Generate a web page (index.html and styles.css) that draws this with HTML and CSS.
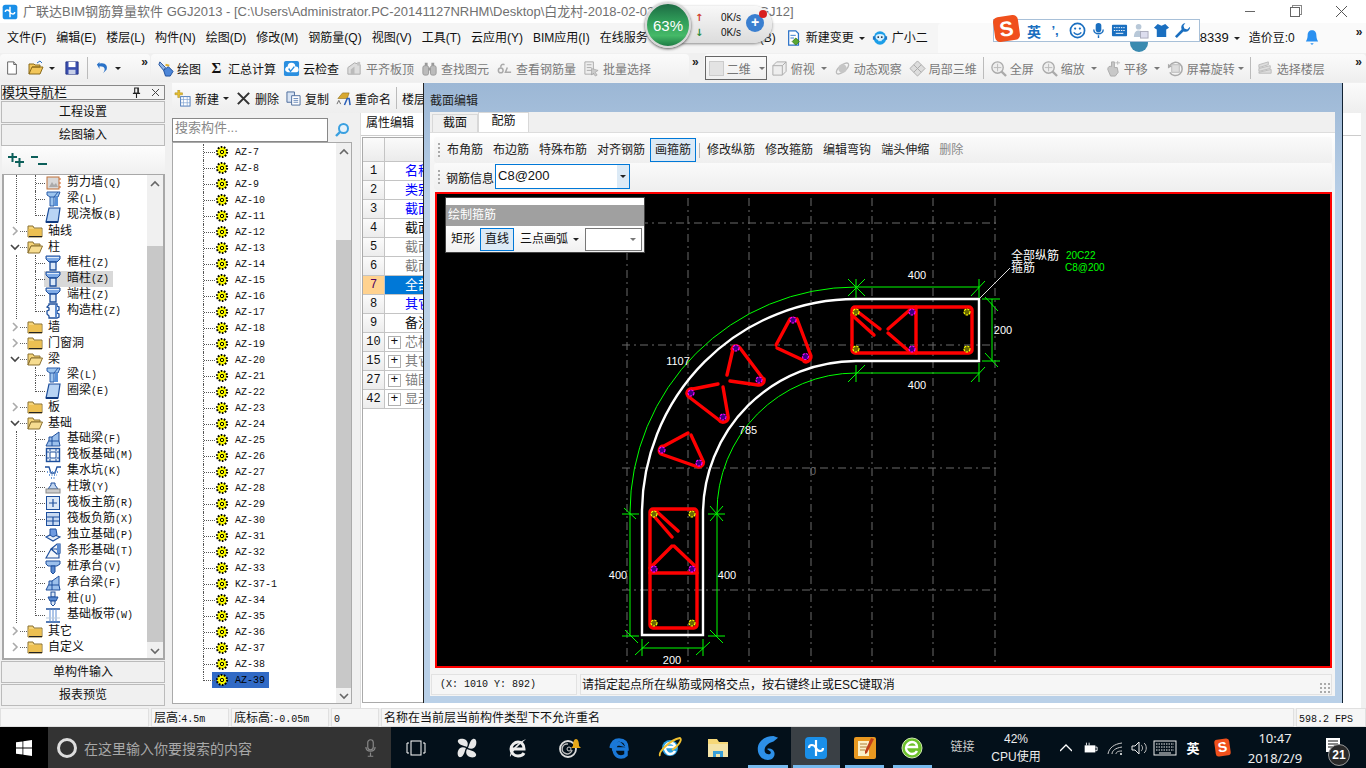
FILE: index.html
```html
<!DOCTYPE html>
<html lang="zh-CN">
<head>
<meta charset="utf-8">
<title>广联达BIM钢筋算量软件 GGJ2013</title>
<link rel="stylesheet" href="styles.css">
</head>
<body>
<svg class="defs" aria-hidden="true">
<defs>
<symbol id="doc" viewBox="0 0 16 16"><path d="M3 1h7l3 3v11H3z" fill="#fff" stroke="#555"/><path d="M10 1v3h3" fill="#ddd" stroke="#555"/></symbol>
<symbol id="open" viewBox="0 0 16 16"><path d="M1 14V4h5l1 1h5v2H4L1 14h11l3-7H4" fill="#f2c65a" stroke="#8a6a1a"/><path d="M9 3l3-2 2 2" fill="none" stroke="#2a6fc0"/></symbol>
<symbol id="save" viewBox="0 0 16 16"><path d="M1 1h14v14H1z" fill="#3a4fb0" stroke="#223080"/><path d="M4 1h8v6H4z" fill="#fff"/><path d="M4 10h8v5H4z" fill="#c8d0e8"/></symbol>
<symbol id="undo" viewBox="0 0 16 16"><path d="M4 3c6-2 10 2 8 7l-4 4c3-4 3-8-4-8v3L1 4l3-3z" fill="#2a72c8"/></symbol>
<symbol id="draw" viewBox="0 0 18 18"><path d="M3 2l6 6-2 3-5-6z" fill="#8fb4e6" stroke="#1e4f9c"/><path d="M7 11l5-4 5 5-3 5H9z" fill="#4d86d8" stroke="#1e4f9c"/><path d="M9 5l4 1" stroke="#e0b030" stroke-width="2"/></symbol>
<symbol id="cloud" viewBox="0 0 18 18"><rect x="1" y="1" width="16" height="16" rx="2" fill="#2a8fe0"/><path d="M3 12a3 3 0 0 1 2-5 4 4 0 0 1 8 0 3 3 0 0 1 1 6H5z" fill="#fff"/><path d="M6 9l2 3 4-5" fill="none" stroke="#2a8fe0" stroke-width="1.5"/></symbol>
<symbol id="gflat" viewBox="0 0 18 18"><path d="M2 15V8l7-5 6 2v10z" fill="#ddd" stroke="#aaa"/><path d="M5 15v-5l4-3v8z" fill="#bbb"/><path d="M12 2h3v4h-3z" fill="#c4c4c4"/></symbol>
<symbol id="gfind" viewBox="0 0 18 18"><rect x="2" y="6" width="6" height="10" rx="2" fill="#bbb" stroke="#999"/><rect x="10" y="6" width="6" height="10" rx="2" fill="#bbb" stroke="#999"/><path d="M4 3h3v3H4zM11 3h3v3h-3zM8 8h2v3H8z" fill="#999"/></symbol>
<symbol id="gsee" viewBox="0 0 18 18"><circle cx="5" cy="11" r="2.5" fill="none" stroke="#aaa" stroke-width="1.6"/><path d="M5 8c0-3 2-4 4-3M12 8l-2 5 6 0" fill="none" stroke="#aaa" stroke-width="1.6"/></symbol>
<symbol id="gbatch" viewBox="0 0 18 18"><path d="M2 2h9v13H2z" fill="#eee" stroke="#aaa"/><path d="M4 5h5M4 8h5M4 11h5" stroke="#aaa"/><path d="M9 9l7 2-3 2 2 3-2 1-2-3-2 2z" fill="#ccc" stroke="#999" stroke-width=".6"/></symbol>
<symbol id="gcube" viewBox="0 0 18 18"><path d="M2 6l4-4h10v10l-4 4H2z" fill="#eee" stroke="#aaa"/><path d="M2 6h10v10M12 6l4-4" fill="none" stroke="#aaa"/></symbol>
<symbol id="gorbit" viewBox="0 0 18 18"><ellipse cx="9" cy="9" rx="8" ry="3.5" transform="rotate(-40 9 9)" fill="none" stroke="#bbb" stroke-width="1.4"/><circle cx="9" cy="9" r="4.5" fill="#c6c6c6"/></symbol>
<symbol id="glocal" viewBox="0 0 18 18"><path d="M9 1l8 8-8 8-8-8z" fill="#ddd" stroke="#aaa"/><path d="M5 5l8 8M13 5l-8 8" stroke="#aaa"/></symbol>
<symbol id="gzoom" viewBox="0 0 18 18"><circle cx="8" cy="8" r="6" fill="#eee" stroke="#aaa" stroke-width="1.4"/><path d="M12 12l5 5" stroke="#aaa" stroke-width="2.4"/><path d="M8 4v8M4 8h8" stroke="#bbb"/></symbol>
<symbol id="gpan" viewBox="0 0 18 18"><path d="M4 10c0-3 2-4 4-3V2h3v6h3l1 5-3 4H7z" fill="#c8c8c8" stroke="#aaa"/><path d="M12 3h5M14.500 1v4" stroke="#bbb"/></symbol>
<symbol id="grot" viewBox="0 0 18 18"><path d="M3 6a7 7 0 1 1 0 7" fill="none" stroke="#aaa" stroke-width="1.6"/><rect x="5" y="5" width="8" height="8" fill="#ddd" stroke="#bbb"/><path d="M1 4l4 3-4 2z" fill="#aaa"/></symbol>
<symbol id="gfloor" viewBox="0 0 18 18"><path d="M2 5l10-3v3L2 8zM2 9l12-3v3L2 12zM2 13l13-3v4H2z" fill="#ddd" stroke="#bbb"/></symbol>
<symbol id="newchg" viewBox="0 0 18 18"><path d="M3 1h8l3 3v13H3z" fill="#fff" stroke="#2a72c8" stroke-width="1.4"/><path d="M5 6h6M5 9h4" stroke="#2a72c8"/><path d="M11 9l4 4-4 4-4-4z" fill="#5aa832" stroke="#3a7a20"/></symbol>
<symbol id="mascot" viewBox="0 0 18 18"><ellipse cx="9" cy="9" rx="7" ry="7.500" fill="#1c9ee8"/><path d="M1 7h3v4H1zM14 7h3v4h-3z" fill="#1c78c8"/><ellipse cx="9" cy="8" rx="5" ry="3.500" fill="#d8f0ff"/><circle cx="7" cy="8" r="1" fill="#123"/><circle cx="11" cy="8" r="1" fill="#123"/><path d="M7 12h4" stroke="#fff"/></symbol>
<symbol id="newc" viewBox="0 0 18 18"><path d="M1 3h3V0h2v3h3v2H6v3H4V5H1z" fill="#e8c030" stroke="#a08010" stroke-width=".5"/><rect x="7" y="7" width="10" height="10" fill="#fff" stroke="#4a78b8"/><path d="M7 10h10M10 7v10M14 7v10M7 13.500h10" stroke="#7aa0d0" stroke-width=".7"/></symbol>
<symbol id="xdel" viewBox="0 0 16 16"><path d="M2 2l12 12M14 2L2 14" stroke="#333" stroke-width="2.200"/></symbol>
<symbol id="copy" viewBox="0 0 16 16"><path d="M1 1h8v11H1z" fill="#d8e4f4" stroke="#4a6a9a"/><path d="M6 5h9v10H6z" fill="#fff" stroke="#4a6a9a"/><path d="M8 8h5M8 10h5M8 12h5" stroke="#6a8aba"/></symbol>
<symbol id="ren" viewBox="0 0 16 16"><path d="M2 8l5-6h7l-2 6z" fill="#d8a830" stroke="#8a6a10" stroke-width=".6"/><path d="M9 15l3-7h2l1 7" fill="none" stroke="#2a5fb8" stroke-width="1.600"/><path d="M1 14l2-4 2 4" fill="none" stroke="#666"/></symbol>
<symbol id="search" viewBox="0 0 16 16"><circle cx="9.500" cy="6.500" r="4.500" fill="#e6f2fb" stroke="#3aa0e0" stroke-width="2"/><path d="M6 10l-4 4" stroke="#3aa0e0" stroke-width="2.400"/></symbol>
<symbol id="folder" viewBox="0 0 16 14"><path d="M1 2h5l1 2h8v9H1z" fill="#f5d478" stroke="#8a7030"/><path d="M1.500 5h13v7.500h-13z" fill="#edc052"/><path d="M2 12.500h13" stroke="#222"/></symbol>
<symbol id="folderopen" viewBox="0 0 16 14"><path d="M1 2h5l1 2h6v2H4L1 13z" fill="#f5d478" stroke="#8a7030"/><path d="M1 13l3-7h11.500l-3 7z" fill="#f6dc90" stroke="#8a7030"/></symbol>
<symbol id="chevr" viewBox="0 0 10 10"><path d="M3 1l4 4-4 4" fill="none" stroke="#aaa" stroke-width="1.600"/></symbol>
<symbol id="chevd" viewBox="0 0 10 10"><path d="M1 3l4 4 4-4" fill="none" stroke="#444" stroke-width="1.600"/></symbol>
<symbol id="wall" viewBox="0 0 16 16"><rect x="2" y="2" width="12" height="12" fill="#d8d8d8" stroke="#c07038"/><path d="M4 12l3-5 2 3 2-2 2 4z" fill="#aaa"/><path d="M15 3v11" stroke="#d06020" stroke-dasharray="2 2"/></symbol>
<symbol id="beam" viewBox="0 0 16 16"><path d="M2 1h13l-2 5H9v9H5V6L2 4z" fill="#9cc4ee" stroke="#2a5ca8"/><path d="M9 6l4-5M5 6h4" stroke="#2a5ca8"/><path d="M10 6h3v9h-4z" fill="#5a92d8"/></symbol>
<symbol id="slab" viewBox="0 0 16 16"><path d="M4 1h11l-2 14H1z" fill="#b8d4f4" stroke="#1e4f9c" stroke-width="1.200"/><path d="M1 15h12" stroke="#103a80" stroke-width="2"/></symbol>
<symbol id="col" viewBox="0 0 16 16"><path d="M1 1h14v3l-3 3H4L1 4z" fill="#7eaae6" stroke="#1e4f9c"/><path d="M5 7h6v8H5z" fill="#dbe8f8" stroke="#1e4f9c" stroke-width="1.300"/><path d="M2 2.500h12" stroke="#e0ecfa"/></symbol>
<symbol id="gzz" viewBox="0 0 16 16"><path d="M4 1h8v2l2 1v3l-2 1v2l2 1v3l-2 1H4v-2L2 11V8l2-1V5L2 4l2-2z" fill="#f4f8fd" stroke="#1e4f9c" stroke-width="1.300"/><path d="M10 2h2v12h-2z" fill="#5a8ad0"/></symbol>
<symbol id="jcl" viewBox="0 0 16 16"><path d="M1 15l3-6V6h3l7-5v9l1 5z" fill="#9cc0ec" stroke="#1e4f9c"/><path d="M7 6v9M4 10h10" stroke="#1e4f9c"/></symbol>
<symbol id="grid" viewBox="0 0 16 16"><rect x="1.500" y="1.500" width="13" height="13" fill="#eaf2fb" stroke="#1e4f9c" stroke-width="1.400"/><rect x="5" y="5" width="6" height="6" fill="#fff" stroke="#1e4f9c"/><path d="M1 5h3M12 5h3M1 11h3M12 11h3M5 1v3M11 1v3M5 12v3M11 12v3" stroke="#1e4f9c"/></symbol>
<symbol id="pit" viewBox="0 0 16 16"><path d="M0 4h4l2 6h4l2-6h4" fill="none" stroke="#1e4f9c" stroke-width="1.300"/><path d="M2 9h12M4 12h8M6 15h4" stroke="#6a9ad8" stroke-dasharray="1 1.500" stroke-width="2"/></symbol>
<symbol id="dun" viewBox="0 0 16 16"><path d="M6 4h4v2l3 4H3l3-4z" fill="#c2d6f0" stroke="#1e4f9c"/><rect x="1" y="10" width="14" height="4" fill="#ccc" stroke="#888"/></symbol>
<symbol id="cross" viewBox="0 0 16 16"><rect x="1.500" y="1.500" width="13" height="13" fill="#dce8f6" stroke="#1e4f9c"/><path d="M8 4v8M4 8h8" stroke="#1e4f9c" stroke-width="1.200"/></symbol>
<symbol id="cross2" viewBox="0 0 16 16"><rect x="1.500" y="1.500" width="13" height="13" fill="#c8daf2" stroke="#1e4f9c"/><path d="M2 6h12M2 10h12M8 6v8" stroke="#1e4f9c" stroke-width="1.200"/></symbol>
<symbol id="dl" viewBox="0 0 16 16"><path d="M1 10l6-3 8 3-7 4z" fill="#e8eef8" stroke="#1e4f9c" stroke-width="1.200"/><path d="M5 2h6l1 6-4 2-3-2z" fill="#6e9ae0" stroke="#1e4f9c"/></symbol>
<symbol id="tx" viewBox="0 0 16 16"><path d="M6 6l6-5h3v9l-3 1zM1 15l5-9h6l2 5v4z" fill="#f2f6fb" stroke="#1e4f9c" stroke-width="1.200"/><path d="M12 1h3v9l-3 1z" fill="#5a8ad0"/></symbol>
<symbol id="zct" viewBox="0 0 16 16"><path d="M1 2h14v3l-3 2H3L1 5z" fill="#9cc0ec" stroke="#1e4f9c"/><path d="M6 7h4v6l-2 2-2-2z" fill="#5a8ad0" stroke="#1e4f9c"/></symbol>
<symbol id="pile" viewBox="0 0 16 16"><rect x="6" y="1" width="4" height="5" fill="#dce8f6" stroke="#1e4f9c"/><path d="M3 6h10l-2 4H5z" fill="#5a8ad0" stroke="#1e4f9c"/><path d="M6 10h4v3l-2 2-2-2z" fill="#dce8f6" stroke="#1e4f9c"/></symbol>
<symbol id="jcbd" viewBox="0 0 16 16"><path d="M1 2h14M1 15h14" stroke="#1e4f9c" stroke-width="1.500"/><path d="M5 2v13M8 2v13M11 2v13" stroke="#5a8ad0"/><path d="M1 11h14" stroke="#bcd"/></symbol>
<symbol id="gear" viewBox="0 0 14 14"><circle cx="7" cy="7" r="5" fill="#ff0" stroke="#000" stroke-width="2.200" stroke-dasharray="1.600 1.500"/><circle cx="7" cy="7" r="3.600" fill="#ff0"/><circle cx="7" cy="7" r="1.700" fill="none" stroke="#000"/></symbol>
<symbol id="win" viewBox="0 0 16 16"><path d="M0 2.300l6.500-.9v6.200H0zM7.300 1.300L16 0v7.600H7.300zM0 8.400h6.500v6.200L0 13.700zM7.300 8.400H16V16l-8.700-1.200z" fill="#fff"/></symbol>
<symbol id="tv" viewBox="0 0 20 16"><rect x="5" y="1" width="10" height="14" fill="none" stroke="#fff"/><path d="M3 3H1v10h2M17 3h2v10h-2" fill="none" stroke="#fff"/></symbol>
<symbol id="fan" viewBox="0 0 22 22"><g fill="#e8e8e8"><path d="M11 10C9 9 3 8 2 5c-1-3 3-4 6-3 3 1 5 4 3 8z"/><path d="M12 11c1-2 2-8 5-9 3-1 4 3 3 6-1 3-4 5-8 3z"/><path d="M11 12c2 1 8 2 9 5 1 3-3 4-6 3-3-1-5-4-3-8z"/><path d="M10 11c-1 2-2 8-5 9-3 1-4-3-3-6 1-3 4-5 8-3z"/></g></symbol>
<symbol id="iew" viewBox="0 0 22 22"><path d="M4 12h13c0-5-3-7-6-7s-7 3-7 7 3 7 7 7c3 0 5-1 6-3" fill="none" stroke="#eee" stroke-width="3"/><path d="M3 20C2 16 9 6 19 2 15 6 9 9 3 20z" fill="#eee"/></symbol>
<symbol id="swirl" viewBox="0 0 24 22"><circle cx="10" cy="12" r="8" fill="none" stroke="#ddd" stroke-width="1.800"/><path d="M10 7a5 5 0 1 0 4 6" fill="none" stroke="#bbb" stroke-width="1.500"/><circle cx="11" cy="12" r="2" fill="none" stroke="#ccc"/><path d="M15 9c0-4 1-7 3-7s3 3 3 7l2 2H13z" fill="#e8a818"/></symbol>
<symbol id="edge" viewBox="0 0 22 22"><path d="M3 12h15c0-6-3-9-8-9-4 0-7 3-8 8 1-3 5-5 9-4-1-1-4 0-5 3-2 5 1 10 6 10 2 0 4-1 5-2v-5" fill="none" stroke="#1a78d8" stroke-width="3.500"/></symbol>
<symbol id="ie" viewBox="0 0 24 24"><circle cx="12" cy="12" r="8" fill="#2a9fe0"/><path d="M7 11h10c0-3-2-4-5-4s-5 3-5 5 2 6 5 6c2 0 4-1 5-3" fill="none" stroke="#fff" stroke-width="2.500"/><path d="M2 20C0 16 12 4 22 2c3 2-3 9-8 12" fill="none" stroke="#f0c030" stroke-width="1.800"/></symbol>
<symbol id="exp" viewBox="0 0 24 22"><path d="M2 2h9l2 3h9v15H2z" fill="#f6d878"/><path d="M2 7h20v13H2z" fill="#f4e4a8"/><path d="M7 14h10v6h-3v-3h-4v3H7z" fill="#3aa0d8"/></symbol>
<symbol id="glogo" viewBox="0 0 26 28"><path d="M20 1C10 1 3 7 3 15c0 7 5 12 11 12 5 0 8-4 7-8-1-4-5-5-8-4l4 3c1 3-4 4-6 1-2-4 1-10 9-12l5-4z" fill="#2d90e8"/></symbol>
<symbol id="gld" viewBox="0 0 24 24"><rect x="1" y="1" width="22" height="22" rx="4" fill="#1a8fe8"/><path d="M12 4v16M5 12c0-4 5-4 7 0s7 4 7 0" fill="none" stroke="#fff" stroke-width="2.200"/></symbol>
<symbol id="notes" viewBox="0 0 24 24"><rect x="1" y="1" width="22" height="22" rx="2" fill="#e89820"/><path d="M5 5h11v15H5z" fill="#fbf0c8"/><path d="M7 8h7M7 11h7M7 14h5" stroke="#b0803a"/><path d="M18 2l3 1-7 14-2 1v-3z" fill="#c0401a"/></symbol>
<symbol id="greene" viewBox="0 0 24 24"><circle cx="12" cy="12" r="10" fill="#6cc02a" stroke="#cfe8b0"/><path d="M6 11h11c0-3-2-5-5-5s-6 3-6 6 3 6 6 6c2 0 4-1 5-3" fill="none" stroke="#fff" stroke-width="2.400"/></symbol>
<symbol id="tup" viewBox="0 0 12 12"><path d="M0 9l6-6 6 6" fill="none" stroke="#fff" stroke-width="1.300"/></symbol>
<symbol id="batt" viewBox="0 0 18 14"><rect x="3" y="4" width="12" height="8" fill="#fff"/><path d="M5 4V1M8 4V1M15 6h2v4h-2" stroke="#fff" fill="none"/></symbol>
<symbol id="wifi" viewBox="0 0 16 14"><path d="M1 13C2 7 7 3 15 2M5 13c0-3 3-6 10-7M9 13c0-2 2-3 6-3" fill="none" stroke="#ccc"/><circle cx="14" cy="13" r="1" fill="#fff"/></symbol>
<symbol id="vol" viewBox="0 0 16 14"><path d="M1 5h3l4-4v12L4 9H1z" fill="none" stroke="#eee"/><path d="M10 4c2 1 2 5 0 6M13 2c3 2 3 8 0 10" fill="none" stroke="#bbb"/></symbol>
<symbol id="kbd" viewBox="0 0 24 16"><rect x="1" y="1" width="22" height="14" fill="none" stroke="#eee"/><path d="M3 4h18M3 7h18M3 10h18" stroke="#eee" stroke-dasharray="1.500 1"/><path d="M6 13h12" stroke="#eee"/></symbol>
<symbol id="note" viewBox="0 0 16 16"><path d="M1 1h14v14H1z" fill="#fff"/><path d="M3 4h10M3 7h10M3 10h10" stroke="#111" stroke-width="1.200"/></symbol>
<symbol id="mic" viewBox="0 0 12 20"><rect x="3" y="1" width="6" height="11" rx="3" fill="none" stroke="#888" stroke-width="1.300"/><path d="M1 9c0 6 10 6 10 0M6 15v4M3 19h6" fill="none" stroke="#888" stroke-width="1.300"/></symbol>
<symbol id="smile" viewBox="0 0 18 18"><circle cx="9" cy="9" r="7.500" fill="#fff" stroke="#1a6fc0" stroke-width="1.800"/><circle cx="6.500" cy="7" r="1.200" fill="#1a6fc0"/><circle cx="11.500" cy="7" r="1.200" fill="#1a6fc0"/><path d="M5 11c2 3 6 3 8 0" fill="none" stroke="#1a6fc0" stroke-width="1.500"/></symbol>
<symbol id="micb" viewBox="0 0 14 18"><rect x="4" y="1" width="6" height="10" rx="3" fill="#1a6fc0"/><path d="M2 8c0 6 10 6 10 0M7 14v3" fill="none" stroke="#1a6fc0" stroke-width="1.500"/></symbol>
<symbol id="kbb" viewBox="0 0 18 14"><rect x="1" y="1" width="16" height="12" rx="1" fill="#1a6fc0"/><path d="M3 4h12M3 7h12" stroke="#fff" stroke-dasharray="1.500 1"/><path d="M5 10h8" stroke="#fff"/></symbol>
<symbol id="usr" viewBox="0 0 18 18"><circle cx="7" cy="5" r="3" fill="#b8c8d8"/><path d="M2 16c0-6 3-7 5-7s4 1 4 2v5z" fill="#b8c8d8"/><rect x="9" y="10" width="8" height="7" fill="#dde" stroke="#aab"/></symbol>
<symbol id="tee" viewBox="0 0 18 18"><path d="M5 2l4 2 4-2 4 4-3 2v8H4V8L1 6z" fill="#1a6fc0"/></symbol>
<symbol id="wrench" viewBox="0 0 18 18"><path d="M12 1a5 5 0 0 0-4 7l-7 7 2 2 7-7a5 5 0 0 0 7-5l-3 3-3-1-1-3z" fill="#1a6fc0"/></symbol>
<symbol id="bell" viewBox="0 0 16 20"><path d="M8 1c4 0 5 3 5 6 0 3 1 5 2 7H1c1-2 2-4 2-7 0-3 1-6 5-6z" fill="#2a90f0"/><path d="M6 16h4l-2 2z" fill="#2a90f0"/></symbol>
<symbol id="pinx" viewBox="0 0 10 12"><path d="M3 1h4v6H3z" fill="none" stroke="#222" stroke-width="1.200"/><path d="M1 7h8M5 7v5" stroke="#222" stroke-width="1.200"/><path d="M6 1h1v6H6z" fill="#222"/></symbol>
</defs>
</svg>

<div class="app">
  <header class="titlebar">
    <svg class="ico-title"><use href="#gld"/></svg>
    <span class="title-text">广联达BIM钢筋算量软件 GGJ2013 - [C:\Users\Administrator.PC-20141127NRHM\Desktop\白龙村-2018-02-02-</span>
    <span class="title-tail">GJ12]</span>
    <div class="winctl">
      <span class="wc-min"></span><span class="wc-max"></span>
      <svg class="wc-x" viewBox="0 0 11 11"><path d="M0 0l11 11M11 0L0 11" stroke="#555"/></svg>
    </div>
  </header>

  <nav class="menubar">
    <span>文件(F)</span><span>编辑(E)</span><span>楼层(L)</span><span>构件(N)</span><span>绘图(D)</span><span>修改(M)</span><span>钢筋量(Q)</span><span>视图(V)</span><span>工具(T)</span><span>云应用(Y)</span><span>BIM应用(I)</span><span>在线服务</span><span class="m-b">(B)</span>
    <span class="m-item"><svg class="i16"><use href="#newchg"/></svg>新建变更<i class="caret caret-m"></i></span>
    <span class="m-item"><svg class="i16"><use href="#mascot"/></svg>广小二</span>
    <div class="m-right">
      <i class="avatar"></i>
      <span class="acct">8339</span><i class="caret caret-a"></i>
      <span class="bean">造价豆:0</span>
      <svg class="i-bell"><use href="#bell"/></svg>
      <span class="more more-top">»</span>
    </div>
  </nav>

  <div class="toolbar">
    <div class="seg seg1">
      <svg class="i14"><use href="#doc"/></svg>
      <svg class="i16 sp1"><use href="#open"/></svg><i class="caret"></i>
      <svg class="i14 sp2"><use href="#save"/></svg>
      <i class="vsep"></i>
      <svg class="i14"><use href="#undo"/></svg><i class="caret"></i>
      <span class="more more-l">»</span>
    </div>
    <div class="seg seg2">
      <span class="tool"><svg class="i17"><use href="#draw"/></svg>绘图</span>
      <span class="tool"><span class="sigma">Σ</span>汇总计算</span>
      <span class="tool"><svg class="i17"><use href="#cloud"/></svg>云检查</span>
      <span class="tool off"><svg class="i17"><use href="#gflat"/></svg>平齐板顶</span>
      <span class="tool off"><svg class="i17"><use href="#gfind"/></svg>查找图元</span>
      <span class="tool off"><svg class="i17"><use href="#gsee"/></svg>查看钢筋量</span>
      <span class="tool off"><svg class="i17"><use href="#gbatch"/></svg>批量选择</span>
    </div>
    <span class="more more-m">»</span>
    <div class="seg seg3">
      <span class="box2d"><i class="sq"></i>二维<i class="caret caret-g"></i></span>
      <span class="tool off"><svg class="i17"><use href="#gcube"/></svg>俯视<i class="caret caret-g caret-t"></i></span>
      <span class="tool off"><svg class="i17"><use href="#gorbit"/></svg>动态观察</span>
      <span class="tool off"><svg class="i17"><use href="#glocal"/></svg>局部三维</span>
      <i class="vsep vsep-t"></i>
      <span class="tool off"><svg class="i17"><use href="#gzoom"/></svg>全屏</span>
      <span class="tool off"><svg class="i17"><use href="#gzoom"/></svg>缩放<i class="caret caret-g caret-t"></i></span>
      <span class="tool off"><svg class="i17"><use href="#gpan"/></svg>平移<i class="caret caret-g caret-t"></i></span>
      <span class="tool off"><svg class="i17"><use href="#grot"/></svg>屏幕旋转<i class="caret caret-g"></i></span>
      <i class="vsep vsep-t"></i>
      <span class="tool off"><svg class="i17"><use href="#gfloor"/></svg>选择楼层</span>
      <span class="more more-r">»</span>
    </div>
  </div>

  <main class="workspace">
    <aside class="nav">
      <div class="nav-head"><span>模块导航栏</span><svg class="pin"><use href="#pinx"/></svg><svg class="nav-x" viewBox="0 0 9 9"><path d="M1 1l7 7M8 1L1 8" stroke="#444"/></svg></div>
      <div class="nav-btn">工程设置</div>
      <div class="nav-btn">绘图输入</div>
      <div class="nav-tools">
        <svg class="plusminus" viewBox="0 0 42 16"><path d="M1 5h9M5.500 1v9M8 10h9M12.500 6v9" stroke="#0c5f5a" stroke-width="2"/><path d="M24 5h7M31 12h9" stroke="#0c5f5a" stroke-width="2"/></svg>
      </div>
      <div class="treebox">
        <div class="tree">
          <div class="kids">
            <div class="kid"><i class="cn"></i><svg class="i16"><use href="#wall"/></svg><span>剪力墙<b>(Q)</b></span></div>
            <div class="kid"><i class="cn"></i><svg class="i16"><use href="#beam"/></svg><span>梁<b>(L)</b></span></div>
            <div class="kid"><i class="cn"></i><svg class="i16"><use href="#slab"/></svg><span>现浇板<b>(B)</b></span></div>
          </div>
          <div class="root"><svg class="chev"><use href="#chevr"/></svg><i class="rc"></i><svg class="fold"><use href="#folder"/></svg><span>轴线</span></div>
          <div class="root"><svg class="chev"><use href="#chevd"/></svg><i class="rc"></i><svg class="fold"><use href="#folderopen"/></svg><span>柱</span></div>
          <div class="kids">
            <div class="kid"><i class="cn"></i><svg class="i16"><use href="#col"/></svg><span>框柱<b>(Z)</b></span></div>
            <div class="kid kid-sel"><i class="cn"></i><svg class="i16"><use href="#col"/></svg><span>暗柱<b>(Z)</b></span></div>
            <div class="kid"><i class="cn"></i><svg class="i16"><use href="#col"/></svg><span>端柱<b>(Z)</b></span></div>
            <div class="kid"><i class="cn"></i><svg class="i16"><use href="#gzz"/></svg><span>构造柱<b>(Z)</b></span></div>
          </div>
          <div class="root"><svg class="chev"><use href="#chevr"/></svg><i class="rc"></i><svg class="fold"><use href="#folder"/></svg><span>墙</span></div>
          <div class="root"><svg class="chev"><use href="#chevr"/></svg><i class="rc"></i><svg class="fold"><use href="#folder"/></svg><span>门窗洞</span></div>
          <div class="root"><svg class="chev"><use href="#chevd"/></svg><i class="rc"></i><svg class="fold"><use href="#folderopen"/></svg><span>梁</span></div>
          <div class="kids kids-plain">
            <div class="kid"><i class="cn"></i><svg class="i16"><use href="#beam"/></svg><span>梁<b>(L)</b></span></div>
            <div class="kid"><i class="cn"></i><svg class="i16"><use href="#slab"/></svg><span>圈梁<b>(E)</b></span></div>
          </div>
          <div class="root"><svg class="chev"><use href="#chevr"/></svg><i class="rc"></i><svg class="fold"><use href="#folder"/></svg><span>板</span></div>
          <div class="root"><svg class="chev"><use href="#chevd"/></svg><i class="rc"></i><svg class="fold"><use href="#folderopen"/></svg><span>基础</span></div>
          <div class="kids">
            <div class="kid"><i class="cn"></i><svg class="i16"><use href="#jcl"/></svg><span>基础梁<b>(F)</b></span></div>
            <div class="kid"><i class="cn"></i><svg class="i16"><use href="#grid"/></svg><span>筏板基础<b>(M)</b></span></div>
            <div class="kid"><i class="cn"></i><svg class="i16"><use href="#pit"/></svg><span>集水坑<b>(K)</b></span></div>
            <div class="kid"><i class="cn"></i><svg class="i16"><use href="#dun"/></svg><span>柱墩<b>(Y)</b></span></div>
            <div class="kid"><i class="cn"></i><svg class="i16"><use href="#cross"/></svg><span>筏板主筋<b>(R)</b></span></div>
            <div class="kid"><i class="cn"></i><svg class="i16"><use href="#cross2"/></svg><span>筏板负筋<b>(X)</b></span></div>
            <div class="kid"><i class="cn"></i><svg class="i16"><use href="#dl"/></svg><span>独立基础<b>(P)</b></span></div>
            <div class="kid"><i class="cn"></i><svg class="i16"><use href="#tx"/></svg><span>条形基础<b>(T)</b></span></div>
            <div class="kid"><i class="cn"></i><svg class="i16"><use href="#zct"/></svg><span>桩承台<b>(V)</b></span></div>
            <div class="kid"><i class="cn"></i><svg class="i16"><use href="#jcl"/></svg><span>承台梁<b>(F)</b></span></div>
            <div class="kid"><i class="cn"></i><svg class="i16"><use href="#pile"/></svg><span>桩<b>(U)</b></span></div>
            <div class="kid"><i class="cn"></i><svg class="i16"><use href="#jcbd"/></svg><span>基础板带<b>(W)</b></span></div>
          </div>
          <div class="root"><svg class="chev"><use href="#chevr"/></svg><i class="rc"></i><svg class="fold"><use href="#folder"/></svg><span>其它</span></div>
          <div class="root"><svg class="chev"><use href="#chevr"/></svg><i class="rc"></i><svg class="fold"><use href="#folder"/></svg><span>自定义</span></div>
        </div>
        <div class="sbar sbar-nav"><svg class="sb-btn" viewBox="0 0 10 10"><path d="M1 7l4-4 4 4" fill="none" stroke="#666" stroke-width="1.600"/></svg><i class="thumb"></i><svg class="sb-btn" viewBox="0 0 10 10"><path d="M1 3l4 4 4-4" fill="none" stroke="#666" stroke-width="1.600"/></svg></div>
      </div>
      <div class="nav-btn">单构件输入</div>
      <div class="nav-btn">报表预览</div>
    </aside>

    <section class="work">
      <div class="subbar">
        <span class="tool"><svg class="i17"><use href="#newc"/></svg>新建<i class="caret"></i></span>
        <span class="tool"><svg class="i15"><use href="#xdel"/></svg>删除</span>
        <span class="tool"><svg class="i15"><use href="#copy"/></svg>复制</span>
        <span class="tool"><svg class="i15"><use href="#ren"/></svg>重命名</span>
        <i class="vsep"></i>
        <span>楼层</span>
      </div>
      <div class="workrow">
        <div class="comp">
          <div class="searchrow">
            <span class="searchbox">搜索构件...</span>
            <svg class="i16"><use href="#search"/></svg>
          </div>
          <div class="listbox">
            <div class="azlist">
              <div class="az"><i class="cn"></i><svg class="i14"><use href="#gear"/></svg><b>AZ-7</b></div>
              <div class="az"><i class="cn"></i><svg class="i14"><use href="#gear"/></svg><b>AZ-8</b></div>
              <div class="az"><i class="cn"></i><svg class="i14"><use href="#gear"/></svg><b>AZ-9</b></div>
              <div class="az"><i class="cn"></i><svg class="i14"><use href="#gear"/></svg><b>AZ-10</b></div>
              <div class="az"><i class="cn"></i><svg class="i14"><use href="#gear"/></svg><b>AZ-11</b></div>
              <div class="az"><i class="cn"></i><svg class="i14"><use href="#gear"/></svg><b>AZ-12</b></div>
              <div class="az"><i class="cn"></i><svg class="i14"><use href="#gear"/></svg><b>AZ-13</b></div>
              <div class="az"><i class="cn"></i><svg class="i14"><use href="#gear"/></svg><b>AZ-14</b></div>
              <div class="az"><i class="cn"></i><svg class="i14"><use href="#gear"/></svg><b>AZ-15</b></div>
              <div class="az"><i class="cn"></i><svg class="i14"><use href="#gear"/></svg><b>AZ-16</b></div>
              <div class="az"><i class="cn"></i><svg class="i14"><use href="#gear"/></svg><b>AZ-17</b></div>
              <div class="az"><i class="cn"></i><svg class="i14"><use href="#gear"/></svg><b>AZ-18</b></div>
              <div class="az"><i class="cn"></i><svg class="i14"><use href="#gear"/></svg><b>AZ-19</b></div>
              <div class="az"><i class="cn"></i><svg class="i14"><use href="#gear"/></svg><b>AZ-20</b></div>
              <div class="az"><i class="cn"></i><svg class="i14"><use href="#gear"/></svg><b>AZ-21</b></div>
              <div class="az"><i class="cn"></i><svg class="i14"><use href="#gear"/></svg><b>AZ-22</b></div>
              <div class="az"><i class="cn"></i><svg class="i14"><use href="#gear"/></svg><b>AZ-23</b></div>
              <div class="az"><i class="cn"></i><svg class="i14"><use href="#gear"/></svg><b>AZ-24</b></div>
              <div class="az"><i class="cn"></i><svg class="i14"><use href="#gear"/></svg><b>AZ-25</b></div>
              <div class="az"><i class="cn"></i><svg class="i14"><use href="#gear"/></svg><b>AZ-26</b></div>
              <div class="az"><i class="cn"></i><svg class="i14"><use href="#gear"/></svg><b>AZ-27</b></div>
              <div class="az"><i class="cn"></i><svg class="i14"><use href="#gear"/></svg><b>AZ-28</b></div>
              <div class="az"><i class="cn"></i><svg class="i14"><use href="#gear"/></svg><b>AZ-29</b></div>
              <div class="az"><i class="cn"></i><svg class="i14"><use href="#gear"/></svg><b>AZ-30</b></div>
              <div class="az"><i class="cn"></i><svg class="i14"><use href="#gear"/></svg><b>AZ-31</b></div>
              <div class="az"><i class="cn"></i><svg class="i14"><use href="#gear"/></svg><b>AZ-32</b></div>
              <div class="az"><i class="cn"></i><svg class="i14"><use href="#gear"/></svg><b>AZ-33</b></div>
              <div class="az"><i class="cn"></i><svg class="i14"><use href="#gear"/></svg><b>KZ-37-1</b></div>
              <div class="az"><i class="cn"></i><svg class="i14"><use href="#gear"/></svg><b>AZ-34</b></div>
              <div class="az"><i class="cn"></i><svg class="i14"><use href="#gear"/></svg><b>AZ-35</b></div>
              <div class="az"><i class="cn"></i><svg class="i14"><use href="#gear"/></svg><b>AZ-36</b></div>
              <div class="az"><i class="cn"></i><svg class="i14"><use href="#gear"/></svg><b>AZ-37</b></div>
              <div class="az"><i class="cn"></i><svg class="i14"><use href="#gear"/></svg><b>AZ-38</b></div>
              <div class="az az-sel"><i class="cn"></i><svg class="i14"><use href="#gear"/></svg><b>AZ-39</b></div>
            </div>
            <div class="sbar sbar-list"><svg class="sb-btn" viewBox="0 0 10 10"><path d="M1 7l4-4 4 4" fill="none" stroke="#666" stroke-width="1.600"/></svg><i class="thumb"></i><svg class="sb-btn" viewBox="0 0 10 10"><path d="M1 3l4 4 4-4" fill="none" stroke="#666" stroke-width="1.600"/></svg></div>
          </div>
        </div>
        <div class="prop">
          <div class="prop-tabs"><span class="prop-tab">属性编辑</span></div>
          <div class="pgrid">
            <div class="phead"><i class="pn"></i><i class="pv"></i></div>
            <div class="pr"><span class="pn">1</span><span class="pv blue">名称</span></div>
            <div class="pr"><span class="pn">2</span><span class="pv blue">类别</span></div>
            <div class="pr"><span class="pn">3</span><span class="pv blue">截面</span></div>
            <div class="pr"><span class="pn">4</span><span class="pv">截面</span></div>
            <div class="pr"><span class="pn">5</span><span class="pv gray">截面</span></div>
            <div class="pr"><span class="pn">6</span><span class="pv gray">截面</span></div>
            <div class="pr pr-sel"><span class="pn">7</span><span class="pv">全部</span></div>
            <div class="pr"><span class="pn">8</span><span class="pv blue">其它</span></div>
            <div class="pr"><span class="pn">9</span><span class="pv">备注</span></div>
            <div class="pr"><span class="pn">10</span><span class="pv gray"><i class="plus">+</i>芯柱</span></div>
            <div class="pr"><span class="pn">15</span><span class="pv gray"><i class="plus">+</i>其它</span></div>
            <div class="pr"><span class="pn">27</span><span class="pv gray"><i class="plus">+</i>锚固</span></div>
            <div class="pr"><span class="pn">42</span><span class="pv gray"><i class="plus">+</i>显示</span></div>
          </div>
        </div>
      </div>
    </section>

    <section class="dialog">
      <div class="dlg-title">截面编辑</div>
      <div class="dlg-client">
        <div class="dlg-tabs"><span class="dtab">截面</span><span class="dtab dtab-on">配筋</span></div>
        <div class="dlg-pane">
          <div class="dbar">
            <i class="grip"></i>
            <span class="dbtn">布角筋</span><span class="dbtn">布边筋</span><span class="dbtn">特殊布筋</span><span class="dbtn">对齐钢筋</span><span class="dbtn dbtn-on">画箍筋</span>
            <i class="dsep"></i>
            <span class="dbtn">修改纵筋</span><span class="dbtn">修改箍筋</span><span class="dbtn">编辑弯钩</span><span class="dbtn">端头伸缩</span><span class="dbtn dbtn-off">删除</span>
          </div>
          <div class="dbar dbar2">
            <i class="grip"></i>
            <span class="rebar-label">钢筋信息</span>
            <span class="combo"><span class="combo-val">C8@200</span><span class="combo-btn"><i class="caret"></i></span></span>
          </div>
          <div class="canvas">
            <svg class="cad" viewBox="437 194 893 472">
              <g class="grid">
                <path d="M627 198V662M688 198V662M749 198V662M811 198V662M872 198V662M933 198V662M995 198V662M622 223H1000M622 345H1000M622 468H1000M622 590H1000"/>
              </g>
              <text class="t-dim gr" x="813" y="475" text-anchor="middle">0</text>
              <path class="wh" d="M856 299H979V361H856A153 153 0 0 0 703 513V635H642V513A214 214 0 0 1 856 299Z"/>
              <g class="gn">
                <path d="M856 287H979M856 373H979M992 299V361M630 513V636M717 513V636M642 648H703"/>
                <path d="M856 287A226 226 0 0 0 630 513M856 373A139 139 0 0 0 717 513"/>
                <path d="M856 279V298M848 279L865 296M848 296L865 279M979 279V298M971 296L985 281"/>
                <path d="M856 365V382M848 382L865 365M979 363V382M971 382L985 367"/>
                <path d="M982 299H1000M985 297L998 311M982 361H1000M985 353L998 367"/>
                <path d="M622 514H639M624 508L636 519M622 636H639M625 630L638 643"/>
                <path d="M708 514H725M710 506L723 521M710 521L723 506M708 636H725M710 630L723 643"/>
                <path d="M642 639V656M703 639V656M635 655L649 642M696 655L710 642"/>
              </g>
              <path class="lead" d="M980 298L1010 268"/>
              <text class="t-dim" x="917" y="279" text-anchor="middle">400</text>
              <text class="t-dim" x="917" y="389" text-anchor="middle">400</text>
              <text class="t-dim" x="1003" y="334" text-anchor="middle">200</text>
              <text class="t-dim" x="678" y="365" text-anchor="middle">1107</text>
              <text class="t-dim" x="748" y="434" text-anchor="middle">785</text>
              <text class="t-dim" x="618" y="579" text-anchor="middle">400</text>
              <text class="t-dim" x="727" y="579" text-anchor="middle">400</text>
              <text class="t-dim" x="672" y="664" text-anchor="middle">200</text>
              <text class="t-cjk" x="1011" y="260">全部纵筋</text>
              <text class="t-cjk" x="1011" y="272">箍筋</text>
              <text class="t-green" x="1066" y="259">20C22</text>
              <text class="t-green" x="1065" y="271">C8@200</text>
              <g class="rd">
                <rect x="852" y="307" width="120" height="46" rx="3"/>
                <path d="M916 307V353M853 308L880 329M852 315L874 335M912 308L888 329M888 333L910 352"/>
                <path d="M790 319L776 345M797 319L811 356M777 348L805 361M789 321A4.500 4.500 0 0 1 797 321M810.500 355A5 5 0 0 1 804 361.500"/>
                <path d="M733 349L727 375M740 348L764 380M730 381L758 385M732 349A4.500 4.500 0 0 1 740 348M764 379A5 5 0 0 1 758 385"/>
                <path d="M693 389L718 384M689 397L719 420M723 387L728 416M693 389A4.500 4.500 0 0 0 689 397M728 416A5 5 0 0 1 719 420"/>
                <path d="M664 446L688 433M661 454L698 467M691 435L703.500 462M664 446A4.500 4.500 0 0 0 661 454M703.500 462A5 5 0 0 1 698 467"/>
                <rect x="650" y="509" width="47" height="119" rx="3"/>
                <path d="M650 573H697M653 515L672 537M655 510L678 531M650 568L672 546M674 546L695 566"/>
              </g>
              <g class="yel">
                <circle cx="856" cy="312" r="3"/><circle cx="856" cy="349" r="3"/><circle cx="967" cy="312" r="3"/><circle cx="967" cy="349" r="3"/>
                <circle cx="654" cy="514" r="3"/><circle cx="692" cy="514" r="3"/><circle cx="654" cy="623" r="3"/><circle cx="692" cy="623" r="3"/>
              </g>
              <g class="mag">
                <circle cx="912" cy="312" r="3"/><circle cx="912" cy="349" r="3"/>
                <circle cx="793" cy="320" r="3"/><circle cx="805.500" cy="356.500" r="3"/>
                <circle cx="736" cy="348" r="3"/><circle cx="759" cy="380" r="3"/>
                <circle cx="691" cy="393" r="3"/><circle cx="723" cy="417" r="3"/>
                <circle cx="662" cy="450" r="3"/><circle cx="699" cy="463" r="3"/>
                <circle cx="654" cy="569" r="3"/><circle cx="692" cy="569" r="3"/>
              </g>
            </svg>
            <div class="floatpanel">
              <div class="fp-top"></div>
              <div class="fp-title">绘制箍筋</div>
              <div class="fp-row">
                <span class="fbtn">矩形</span><span class="fbtn fbtn-on">直线</span><span class="fbtn fbtn-arc">三点画弧<i class="caret caret-f"></i></span>
                <span class="fcombo"><i class="caret caret-g"></i></span>
              </div>
            </div>
          </div>
          <div class="dstatus">
            <span class="ds-cell ds-xy">(X: 1010 Y: 892)</span>
            <span class="ds-cell ds-msg">请指定起点所在纵筋或网格交点，按右键终止或ESC键取消<i class="sizegrip"></i></span>
          </div>
        </div>
      </div>
    </section>
  </main>

  <footer class="status">
    <span class="st st1"></span>
    <span class="st st2">层高:<b>4.5m</b></span>
    <span class="st st3">底标高:<b>-0.05m</b></span>
    <span class="st st4"><b>0</b></span>
    <span class="st st5">名称在当前层当前构件类型下不允许重名</span>
    <span class="st st6"><b>598.2 FPS</b></span>
  </footer>

  <div class="taskbar">
    <span class="start"><svg class="i16"><use href="#win"/></svg></span>
    <div class="tsearch">
      <i class="cortana"></i><span class="ts-text">在这里输入你要搜索的内容</span><svg class="ts-mic"><use href="#mic"/></svg>
    </div>
    <span class="tk w50"><svg class="i-tv"><use href="#tv"/></svg></span>
    <span class="tk w51"><svg class="i22"><use href="#fan"/></svg></span>
    <span class="tk w52"><svg class="i22"><use href="#iew"/></svg></span>
    <span class="tk w51"><svg class="i24"><use href="#swirl"/></svg></span>
    <span class="tk w50"><svg class="i22"><use href="#edge"/></svg></span>
    <span class="tk w49"><svg class="i24"><use href="#ie"/></svg></span>
    <span class="tk w48"><svg class="i24"><use href="#exp"/></svg></span>
    <span class="tk w49 run run-a"><svg class="i-g"><use href="#glogo"/></svg></span>
    <span class="tk w49 run run-b"><svg class="i24"><use href="#gld"/></svg></span>
    <span class="tk w49 run run-c"><svg class="i24"><use href="#notes"/></svg></span>
    <span class="tk w46 run run-d"><svg class="i24"><use href="#greene"/></svg></span>
    <span class="tlink">链接</span>
    <span class="tcpu">42%<br>CPU使用</span>
    <span class="tray tr24 first"><svg class="i12"><use href="#tup"/></svg></span>
    <span class="tray tr24"><svg class="i16"><use href="#batt"/></svg></span>
    <span class="tray tr26"><svg class="i16"><use href="#wifi"/></svg></span>
    <span class="tray tr22"><svg class="i16"><use href="#vol"/></svg></span>
    <span class="tray tr30"><svg class="i-kb"><use href="#kbd"/></svg></span>
    <span class="tray tr26 t-ying">英</span>
    <span class="tray tr32"><span class="s-logo s-small">S</span></span>
    <span class="tclock">10:47<br>2018/2/9</span>
    <span class="tnote"><svg class="i16"><use href="#note"/></svg><em class="badge">21</em></span>
  </div>
</div>

<div class="netwidget">
  <div class="net-pill">
    <div class="net-rates">
      <span><i class="ar ar-up">↑</i><b>0K/s</b></span>
      <span><i class="ar ar-dn">↓</i><b>0K/s</b></span>
    </div>
    <span class="net-plus">+<i class="net-dot"></i></span>
  </div>
  <div class="net-ball">63%</div>
</div>

<div class="sogou">
  <span class="s-logo">S</span>
  <span class="s-ying">英</span>
  <span class="s-dot">’,</span>
  <svg class="i17"><use href="#smile"/></svg>
  <svg class="i17"><use href="#micb"/></svg>
  <svg class="i17"><use href="#kbb"/></svg>
  <svg class="i17"><use href="#usr"/></svg>
  <svg class="i17"><use href="#tee"/></svg>
  <svg class="i17"><use href="#wrench"/></svg>
</div>
</body>
</html>
```

FILE: styles.css
```css
* { box-sizing: border-box; }
html, body { margin: 0; padding: 0; height: 100%; overflow: hidden; }
body { position: relative; font-family: "Liberation Sans", "Noto Sans CJK SC", sans-serif; font-size: 12px; color: #111; background: #f0f0f0; }
i, em { font-style: normal; }
.defs { position: absolute; width: 0; height: 0; }
svg { flex: none; display: block; }
.i12 { width: 12px; height: 12px; }
.i14 { width: 14px; height: 14px; }
.i15 { width: 15px; height: 15px; }
.i16 { width: 16px; height: 16px; }
.i17 { width: 17px; height: 17px; }
.i22 { width: 22px; height: 22px; }
.i24 { width: 24px; height: 24px; }

.app { width: 1366px; height: 768px; display: flex; flex-direction: column; overflow: hidden; }

/* title */
.titlebar { height: 23px; flex: none; background: #fff; display: flex; align-items: center; padding-left: 2px; color: #707070; font-size: 13px; white-space: nowrap; }
.ico-title { width: 16px; height: 16px; margin-right: 5px; }
.title-text { width: 625px; flex: none; line-height: 23px; }
.title-tail { margin-left: 111px; }
.winctl { display: flex; align-items: center; margin-left: auto; width: 121px; flex: none; }
.wc-min { width: 10px; border-top: 1px solid #666; }
.wc-max { width: 10px; height: 10px; border: 1px solid #666; margin-left: 35px; box-shadow: 2px -2px 0 -1px #fff, 2px -2px 0 0 #888; }
.wc-x { width: 11px; height: 11px; margin-left: 36px; }

/* menu */
.menubar { height: 30px; flex: none; background: #f5f5f5; display: flex; align-items: center; gap: 10px; padding-left: 7px; white-space: nowrap; line-height: 30px; }
.m-b { margin-left: 102px; }
.m-item { display: flex; align-items: center; gap: 4px; }
.m-right { margin-left: auto; display: flex; align-items: center; height: 30px; background: #fafafa; padding-right: 4px; border-radius: 4px 0 0 0; }
.avatar { width: 18px; height: 18px; border-radius: 50%; background: #3a8ab0; margin-left: 192px; margin-top: 10px; flex: none; }
.acct { margin-left: 52px; font-size: 13px; }
.caret-a { margin-left: 5px; }
.bean { margin-left: 9px; }
.i-bell { width: 14px; height: 18px; margin-left: 10px; }
.more { font-weight: 700; font-size: 12px; line-height: 14px; color: #222; flex: none; }
.more-top { margin-left: 37px; align-self: flex-start; margin-top: 2px; }
.caret { display: inline-block; width: 0; height: 0; border: 3px solid transparent; border-top: 3px solid #222; border-bottom: 0; flex: none; }
.caret-g { border-top-color: #777; }
.caret-m { margin-left: 1px; margin-right: -3px; }
.caret-t { margin-left: 3px; }

/* toolbar */
.toolbar { height: 30px; flex: none; background: #f0f0f0; display: flex; align-items: center; }
.seg { height: 28px; border-radius: 4px; background: linear-gradient(#fbfbfb, #eeeeee); display: flex; align-items: center; white-space: nowrap; }
.seg1 { width: 150px; padding-left: 5px; gap: 5px; }
.sp1 { margin-left: 4px; }
.sp2 { margin-left: 5px; }
.vsep { width: 1px; height: 22px; background: #bbb; margin: 0 3px; flex: none; }
.more-l { margin-left: auto; margin-right: 2px; align-self: flex-start; margin-top: 1px; }
.seg2 { width: 538px; margin-left: 1px; padding-left: 6px; gap: 7px; }
.more-m { margin-left: 3px; margin-right: 1px; margin-top: -12px; }
.seg3 { flex: 1; margin-left: 4px; gap: 7px; padding-left: 1px; }
.tool { display: inline-flex; align-items: center; gap: 3px; }
.off { color: #7a7a7a; }
.sigma { width: 17px; text-align: center; font-weight: 700; font-size: 15px; font-family: "Liberation Serif", serif; }
.box2d { width: 62px; height: 24px; margin-right: -3px; border: 1px solid #666; display: flex; align-items: center; color: #777; padding-left: 3px; gap: 3px; flex: none; }
.box2d .caret { margin-left: 5px; }
.sq { width: 15px; height: 15px; background: #e3e3e3; border: 1px solid #ccc; flex: none; }
.vsep-t { margin: 0 -1px; }
.more-r { margin-left: auto; margin-right: 4px; align-self: flex-start; margin-top: 1px; }

/* workspace */
.workspace { flex: 1; min-height: 0; display: flex; position: relative; }
.nav { width: 167px; flex: none; display: flex; flex-direction: column; padding-top: 2px; }
.nav-head { height: 15px; margin: 0 2px 0 1px; border: 1px solid #888; background: #f3f3f3; display: flex; align-items: center; line-height: 13px; font-size: 13px; }
.pin { margin-left: auto; width: 9px; height: 11px; margin-right: 10px; }
.nav-x { width: 9px; height: 9px; margin-right: 4px; }
.nav-btn { height: 22px; margin: 1px 2px 0 1px; border: 1px solid #bbb; background: #f0f0f0; text-align: center; line-height: 21px; font-size: 12px; flex: none; }
.nav-tools { height: 28px; flex: none; margin: 0 2px; background: linear-gradient(#fdfdfd, #f0f0f0); display: flex; align-items: center; padding-left: 5px; }
.plusminus { width: 42px; height: 16px; }
.treebox { height: 486px; flex: none; margin: 0 2px; border: 2px solid #a8a8a8; border-top-width: 1px; background: #fff; display: flex; overflow: hidden; }
.tree { flex: 1; min-width: 0; overflow: hidden; }
.root, .kid { height: 16px; display: flex; align-items: center; white-space: nowrap; line-height: 16px; }
.root { padding-left: 6px; }
.chev { width: 10px; height: 10px; }
.rc { width: 7px; border-top: 1px dotted #666; }
.fold { width: 16px; height: 14px; margin-right: 5px; }
.kids { margin-left: 12px; border-left: 1px dotted #555; padding-left: 18px; }
.kids-plain { border-left-color: transparent; }
.cn { width: 10px; height: 16px; flex: none; border-left: 1px dotted #555; position: relative; }
.cn::after { content: ""; position: absolute; left: 0; right: 0; top: 8px; border-top: 1px dotted #555; }
.kid:last-child .cn { height: 9px; align-self: flex-start; }
.kid > span { margin-left: 6px; padding: 0 2px 0 0; }
.kid b, .status b, .az b { font-weight: 400; font-family: "Liberation Mono", monospace; font-size: 10px; }
.kid-sel { background: linear-gradient(90deg, transparent 9px, #d9d9d9 9px, #d9d9d9 78px, transparent 78px); }
.sbar { width: 16px; flex: none; display: flex; flex-direction: column; background: #f0f0f0; align-items: center; }
.sb-btn { width: 10px; height: 10px; margin: 4px 0; }
.thumb { width: 100%; background: #c8c8c8; flex: none; }
.sbar-nav .thumb { margin-top: 53px; height: 396px; }
.sbar-nav .sb-btn:last-child { margin-top: 4px; }
.sbar-list { margin-left: auto; width: 16px; }
.sbar-list .thumb { margin-top: 79px; height: 448px; }
.sbar-list .sb-btn:last-child { margin-top: 3px; }

/* work */
.work { flex: 1; min-width: 0; display: flex; flex-direction: column; }
.subbar { height: 30px; flex: none; margin-left: 5px; padding-left: 2px; display: flex; align-items: center; gap: 7px; background: linear-gradient(#fbfbfb, #eee); white-space: nowrap; }
.subbar .tool { gap: 4px; }
.subbar .vsep { margin: 0 -2px; }
.subbar .caret { margin-left: 0; }
.workrow { flex: 1; min-height: 0; display: flex; }
.comp { width: 180px; margin-left: 5px; flex: none; display: flex; flex-direction: column; }
.searchrow { height: 29px; display: flex; align-items: center; gap: 6px; padding-top: 4px; }
.searchbox { width: 156px; height: 24px; border: 1px solid #888; background: #fff; color: #888; font-size: 13px; line-height: 17px; padding-left: 2px; }
.listbox { height: 562px; border: 1px solid #aaa; background: #fff; display: flex; overflow: hidden; }
.azlist { flex: none; margin-left: 30px; padding-top: 1px; width: 133px; }
.az { height: 16px; display: flex; align-items: center; gap: 0; white-space: nowrap; }
.az .cn { width: 12px; }
.az:last-child .cn { height: 9px; align-self: flex-start; }
.az b { margin-left: 6px; }
.az-sel { background: linear-gradient(90deg, transparent 9px, #316ac5 9px, #316ac5 66px, transparent 66px); color: #000; }
.prop { flex: 1; min-width: 0; margin-left: 8px; margin-right: 5px; display: flex; flex-direction: column; background: #fff; border-left: 1px solid #ddd; }
.prop-tabs { height: 23px; flex: none; border-bottom: 1px solid #ccc; padding-left: 2px; padding-top: 2px; }
.prop-tab { display: inline-block; height: 20px; line-height: 16px; padding: 0 3px; font-size: 12px; }
.pgrid { flex: 1; width: 700px; margin: 1px 0 5px 1px; border: 1px solid #aaa; background: #fff; overflow: hidden; }
.phead { height: 24px; display: flex; background: linear-gradient(#fafafa, #ebebeb); border-bottom: 1px solid #c4c4c4; }
.pr { height: 19px; display: flex; border-bottom: 1px solid #c4c4c4; line-height: 18px; }
.pn { width: 22px; flex: none; text-align: center; background: linear-gradient(#fbfbfb, #ececec); border-right: 1px solid #c4c4c4; font-family: "Liberation Mono", monospace; font-size: 12px; }
.pv { flex: 1; padding-left: 20px; display: flex; align-items: center; white-space: nowrap; font-size: 13px; }
.blue { color: #0000ff; }
.gray { color: #808080; }
.pr-sel .pn { background: #ffd28f; color: #500060; }
.pr-sel .pv { background: #0078d7; color: #fff; }
.plus { width: 13px; height: 13px; border: 1px solid #b0b0b0; color: #111; text-align: center; line-height: 10px; font-size: 13px; margin-left: -17px; margin-right: 4px; background: #fff; font-family: "Liberation Mono", monospace; }

/* dialog (a window over the workspace) */
.dialog { position: absolute; left: 423px; top: 0; width: 920px; height: 620px; border-left: 1px solid #222; border-right: 1px solid #123; background: linear-gradient(#9cb7d5, #b9d0e8 120px); display: flex; flex-direction: column; }
.dlg-title { height: 29px; flex: none; padding-left: 6px; line-height: 36px; font-size: 12px; color: #222; }
.dlg-client { width: 905px; height: 584px; margin-left: 6px; background: #f0f0f0; display: flex; flex-direction: column; }
.dlg-tabs { height: 20px; flex: none; display: flex; align-items: flex-end; padding-left: 2px; }
.dtab { height: 18px; width: 46px; border: 1px solid #d8d8d8; border-bottom: 0; text-align: center; font-size: 12px; line-height: 17px; background: #f0f0f0; }
.dtab-on { height: 20px; width: 51px; background: #fff; line-height: 17px; }
.dlg-pane { flex: 1; border-top: 1px solid #ddd; padding: 4px 3px 0 4px; display: flex; flex-direction: column; background: linear-gradient(#fff, #f4f4f4 30px); }
.dbar { height: 26px; flex: none; display: flex; align-items: center; white-space: nowrap; border-radius: 3px; background: linear-gradient(#fafafa, #efefef); }
.dbar2 { height: 27px; }
.grip { width: 2px; height: 14px; margin: 0 2px 0 4px; flex: none; background: repeating-linear-gradient(#aaa 0 2px, transparent 2px 4px); }
.dbtn { height: 24px; line-height: 22px; border: 1px solid transparent; padding: 0 4px; color: #222; }
.dbtn-on { border-color: #0078d7; background: #dceaf6; }
.dbtn-off { color: #888; }
.dsep { width: 1px; height: 15px; background: #bbb; margin: 0 2px 0 3px; flex: none; }
.rebar-label { margin: 2px 1px 0 4px; }
.combo { width: 135px; height: 25px; border: 1px solid #0078d7; background: #fff; display: flex; align-items: stretch; }
.combo-val { flex: 1; padding-left: 2px; font-family: "Liberation Sans", sans-serif; font-size: 13px; line-height: 22px; }
.combo-btn { width: 12px; background: #dceaf6; display: flex; align-items: center; justify-content: center; }
.canvas { width: 897px; height: 476px; flex: none; margin: 2px 0 0 1px; border: 2px solid #f00; background: #000; position: relative; overflow: hidden; }
.cad { width: 893px; height: 472px; }
.grid path { stroke: #6a6a6a; stroke-width: 1; stroke-dasharray: 8 4 2 4; fill: none; }
.wh { fill: none; stroke: #fff; stroke-width: 2.400; }
.gn path { fill: none; stroke: #00ff00; stroke-width: 1; }
.lead { stroke: #ddd; fill: none; }
.rd rect, .rd path { fill: none; stroke: #f00; stroke-width: 3.400; stroke-linecap: round; }
.yel circle { fill: #6a6a00; stroke: #ff0; stroke-width: 1.200; stroke-dasharray: 2.500 1; }
.mag circle { fill: #3a0080; stroke: #ff00ff; stroke-width: 1.200; stroke-dasharray: 2.500 1; }
.t-dim { font-family: "Liberation Sans", sans-serif; font-size: 11px; fill: #fff; }
.gr { fill: #666; }
.t-cjk { font-size: 12px; fill: #fff; }
.t-green { font-family: "Liberation Sans", sans-serif; font-size: 10px; fill: #00ff00; }
.floatpanel { position: absolute; left: 8px; top: 3px; width: 200px; height: 56px; border: 1px solid #444; background: #f2f2f2; display: flex; flex-direction: column; }
.fp-top { height: 7px; background: #fff; flex: none; }
.fp-title { height: 21px; flex: none; background: #a0a0a0; color: #fff; line-height: 21px; padding-left: 2px; }
.fp-row { flex: 1; display: flex; align-items: center; background: linear-gradient(#fff, #f0f0f0); }
.fbtn { height: 23px; line-height: 21px; border: 1px solid transparent; padding: 0 4px; white-space: nowrap; }
.fbtn-on { border-color: #0078d7; background: #dceaf6; }
.fbtn-arc { margin-left: 1px; display: flex; align-items: center; }
.caret-f { margin-left: 5px; }
.fcombo { width: 57px; height: 23px; border: 1px solid #777; background: #fff; margin-left: 1px; display: flex; align-items: center; justify-content: flex-end; padding-right: 5px; }
.dstatus { height: 21px; flex: none; margin-top: 6px; display: flex; gap: 3px; }
.ds-cell { border: 1px solid #e2e2e2; background: #f6f6f6; line-height: 20px; white-space: nowrap; }
.ds-xy { width: 146px; margin-left: -3px; padding-left: 8px; font-family: "Liberation Mono", monospace; font-size: 10px; }
.ds-msg { flex: 1; padding-left: 1px; position: relative; }
.sizegrip { position: absolute; right: 1px; bottom: 1px; width: 10px; height: 10px; background: radial-gradient(circle at 1px 1px, #aaa 1px, transparent 1.200px) 0 0 / 4px 4px; }

/* status */
.status { height: 19px; flex: none; display: flex; gap: 2px; background: #f0f0f0; white-space: nowrap; }
.st { border: 1px solid #e0e0e0; background: #f6f6f6; line-height: 19px; padding-left: 2px; }
.st1 { width: 149px; }
.st2 { width: 78px; }
.st3 { width: 98px; }
.st4 { width: 48px; }
.st5 { flex: 1; }
.st6 { width: 70px; }

/* taskbar */
.taskbar { height: 41px; flex: none; background: #03101a; color: #eee; display: flex; align-items: center; }
.taskbar > span { height: 41px; }
.start { width: 48px; background: #000; display: flex; align-items: center; justify-content: center; flex: none; }
.tsearch { width: 343px; height: 41px; flex: none; background: #333; display: flex; align-items: center; padding-left: 9px; color: #a8a8a8; font-size: 14px; }
.cortana { width: 20px; height: 20px; border: 3px solid #ddd; border-radius: 50%; flex: none; margin-right: 7px; }
.ts-text { flex: 1; }
.ts-mic { width: 11px; height: 20px; margin-right: 15px; }
.tk { display: flex; align-items: center; justify-content: center; flex: none; position: relative; }
.w46 { width: 46px; } .w48 { width: 48px; } .w49 { width: 49px; } .w50 { width: 50px; } .w51 { width: 51px; } .w52 { width: 52px; }
.i-tv { width: 20px; height: 16px; }
.i-g { width: 24px; height: 26px; }
.run::after { content: ""; position: absolute; bottom: 0; height: 3px; background: #76b9ed; }
.run-a::after { left: 6px; right: 3px; }
.run-b { background: #3a4045; }
.run-b::after { left: 2px; right: 0; }
.run-c::after { left: 5px; right: 5px; }
.run-d::after { left: 4px; right: 3px; }
.tlink { width: 55px; flex: none; text-align: center; line-height: 41px; font-size: 12px; color: #ccc; }
.tcpu { width: 52px; flex: none; text-align: center; font-size: 12px; line-height: 18px; padding-top: 3px; white-space: nowrap; }
.tray { display: flex; align-items: center; justify-content: center; flex: none; }
.first { margin-left: 12px; }
.tr22 { width: 22px; } .tr24 { width: 24px; } .tr26 { width: 26px; } .tr30 { width: 30px; } .tr32 { width: 32px; }
.i-kb { width: 24px; height: 16px; }
.t-ying { font-weight: 700; font-size: 13px; color: #fff; }
.tclock { width: 74px; flex: none; text-align: center; font-family: "Noto Sans", sans-serif; font-size: 13px; line-height: 20px; padding-top: 1px; white-space: nowrap; }
.tnote { flex: 1; display: flex; align-items: center; padding: 0 0 6px 13px; position: relative; }
.badge { position: absolute; left: 16px; top: 17px; width: 22px; height: 22px; border-radius: 50%; background: #2a2a2a; border: 1px solid #999; color: #fff; font-size: 12px; line-height: 20px; text-align: center; font-weight: 700; }

/* floating desktop widgets */
.netwidget { position: absolute; left: 645px; top: 2px; width: 128px; height: 46px; }
.net-ball { position: absolute; left: 0; top: 0; width: 46px; height: 46px; border-radius: 50%; background: linear-gradient(#1d6b44 0, #2f9c58 40%, #45b968 75%, #1e7d45); border: 2px solid #d8d8d8; box-shadow: 0 1px 3px #555; color: #fff; font-size: 15px; font-family: "Liberation Sans", sans-serif; text-align: center; line-height: 44px; }
.net-pill { position: absolute; left: 25px; top: 4px; width: 102px; height: 37px; border-radius: 0 19px 19px 0; background: linear-gradient(#f8f8f8, #dcdcdc); box-shadow: 0 1px 3px #888; display: flex; align-items: center; padding-left: 25px; }
.net-rates { display: flex; flex-direction: column; gap: 3px; width: 46px; padding-top: 2px; font-family: "Liberation Sans", sans-serif; font-size: 10px; }
.net-rates span { display: flex; justify-content: space-between; line-height: 12px; }
.net-rates b { font-weight: 400; }
.ar { font-weight: 700; font-family: "DejaVu Sans", sans-serif; }
.ar-up { color: #d04030; }
.ar-dn { color: #2a8a40; }
.net-plus { position: relative; width: 18px; height: 18px; margin-left: 5px; margin-top: -3px; border-radius: 50%; background: #3a7fd0; color: #fff; text-align: center; font-weight: 700; line-height: 17px; font-size: 14px; font-family: "Liberation Sans", sans-serif; }
.net-dot { position: absolute; right: -3px; top: -4px; width: 8px; height: 8px; border-radius: 50%; background: #d82020; }

.sogou { position: absolute; left: 993px; top: 19px; width: 207px; height: 23px; background: #fff; border: 1px solid #a8c0d8; display: flex; align-items: center; gap: 4px; padding-left: 33px; }
.s-logo { width: 25px; height: 25px; border-radius: 5px; background: #f0501c; color: #fff; font: 700 21px/25px "Liberation Sans", sans-serif; text-align: center; transform: rotate(-8deg); }
.sogou .s-logo { position: absolute; left: 0; top: -4px; }
.s-small { display: block; width: 15px; height: 17px; font-size: 14px; line-height: 17px; border-radius: 3px; }
.s-ying { color: #1a6fc0; font-weight: 700; font-size: 14px; }
.s-dot { color: #1a6fc0; width: 20px; font-size: 13px; font-weight: 700; text-align: center; }
```
